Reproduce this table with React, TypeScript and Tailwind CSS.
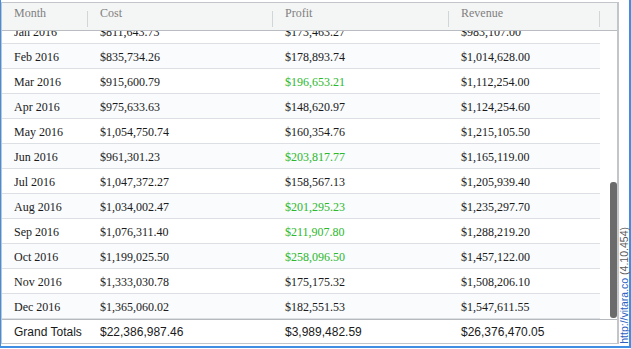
import React from 'react';

interface Row {
  month: string;
  cost: string;
  profit: string;
  revenue: string;
  high?: boolean;
}

const rows: Row[] = [
  { month: 'Jan 2016', cost: '$811,643.73', profit: '$173,463.27', revenue: '$983,107.00' },
  { month: 'Feb 2016', cost: '$835,734.26', profit: '$178,893.74', revenue: '$1,014,628.00' },
  { month: 'Mar 2016', cost: '$915,600.79', profit: '$196,653.21', revenue: '$1,112,254.00', high: true },
  { month: 'Apr 2016', cost: '$975,633.63', profit: '$148,620.97', revenue: '$1,124,254.60' },
  { month: 'May 2016', cost: '$1,054,750.74', profit: '$160,354.76', revenue: '$1,215,105.50' },
  { month: 'Jun 2016', cost: '$961,301.23', profit: '$203,817.77', revenue: '$1,165,119.00', high: true },
  { month: 'Jul 2016', cost: '$1,047,372.27', profit: '$158,567.13', revenue: '$1,205,939.40' },
  { month: 'Aug 2016', cost: '$1,034,002.47', profit: '$201,295.23', revenue: '$1,235,297.70', high: true },
  { month: 'Sep 2016', cost: '$1,076,311.40', profit: '$211,907.80', revenue: '$1,288,219.20', high: true },
  { month: 'Oct 2016', cost: '$1,199,025.50', profit: '$258,096.50', revenue: '$1,457,122.00', high: true },
  { month: 'Nov 2016', cost: '$1,333,030.78', profit: '$175,175.32', revenue: '$1,508,206.10' },
  { month: 'Dec 2016', cost: '$1,365,060.02', profit: '$182,551.53', revenue: '$1,547,611.55' },
];

const HeaderCell = ({ label, width }: { label: string; width: string }) => (
  <div className={`flex justify-between ${width}`}>
    <span className="pl-3 pt-[3px] leading-[14px]">{label}</span>
    <span className="mt-[8px] h-[16px] w-px bg-[#d3d6d9]" />
  </div>
);

export default function App() {
  return (
    <div className="w-[631px] h-[349px] bg-white">
      <div className="flex h-[348px] border-l border-r-2 border-b-2 border-[#3f8ee4]">
        {/* Grid */}
        <div className="mt-[2px] flex h-[342px] w-[618px] flex-col border-l border-t border-r-2 border-b border-[#c2c5c9]">
          {/* Header */}
          <div className="flex h-[28px] shrink-0 border-b border-[#b9bcc0] bg-[#f4f5f5] text-[12px] text-[#808080] font-['Liberation_Serif',serif]">
            <HeaderCell label="Month" width="w-[86px]" />
            <HeaderCell label="Cost" width="w-[185px]" />
            <HeaderCell label="Profit" width="w-[176px]" />
            <HeaderCell label="Revenue" width="w-[151px]" />
          </div>

          {/* Body */}
          <div className="flex h-[288px] shrink-0">
            <div className="flex w-[598px] flex-col justify-end overflow-hidden text-[12px] text-[#1a1a1a] font-['Liberation_Serif',serif]">
              {rows.map((r, i) => (
                <div
                  key={r.month}
                  className={`flex h-[25px] shrink-0 items-center border-b border-[#dcdfe3] pt-[2px] ${i % 2 === 1 ? 'bg-[#f9fbfd]' : 'bg-white'}`}
                >
                  <div className="w-[86px] pl-3">{r.month}</div>
                  <div className="w-[185px] pl-3">{r.cost}</div>
                  <div className={`w-[176px] pl-3 ${r.high ? 'text-[#2bb82b]' : ''}`}>{r.profit}</div>
                  <div className="w-[151px] pl-3">{r.revenue}</div>
                </div>
              ))}
            </div>
            {/* Scrollbar */}
            <div className="flex w-[17px] justify-end pt-[151px]">
              <div className="h-[136px] w-[7px] rounded-[3px] bg-[#6b6b6b]" />
            </div>
          </div>

          {/* Totals */}
          <div className="flex h-[24px] shrink-0 items-center border-t border-[#b6babe] pt-px text-[12px] text-[#1a1a1a] font-['Liberation_Sans',sans-serif]">
            <div className="w-[86px] pl-3">Grand Totals</div>
            <div className="w-[185px] pl-3">$22,386,987.46</div>
            <div className="w-[176px] pl-3">$3,989,482.59</div>
            <div className="w-[151px] pl-3">$26,376,470.05</div>
          </div>
        </div>

        {/* Watermark */}
        <div className="flex w-[10px] items-end pb-[2px]">
          <span className="rotate-180 whitespace-nowrap text-[10.5px] leading-[10px] [writing-mode:vertical-rl] font-['Liberation_Sans',sans-serif]">
            <span className="text-[#2d5fbd]">http://vitara.co</span>
            <span className="text-[#5a5a5a]"> (4.10.454)</span>
          </span>
        </div>
      </div>
    </div>
  );
}
